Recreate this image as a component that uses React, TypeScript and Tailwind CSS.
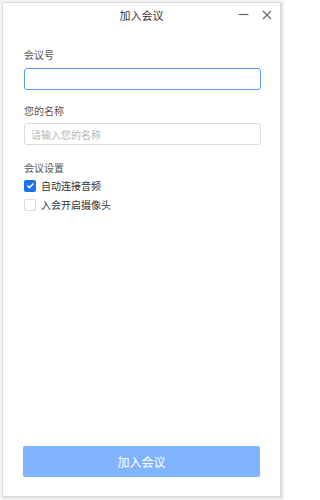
import { useState } from 'react';

const font = { fontFamily: '"Noto Sans CJK SC", "Noto Sans", sans-serif' };

export default function App() {
  const [audio, setAudio] = useState(true);
  const [camera, setCamera] = useState(false);

  return (
    <div className="w-[284px] h-[500px] bg-[#f4f4f4] pl-[2px] pt-[2px] pr-[3px] pb-[3px]" style={font}>
      <div className="h-full flex flex-col bg-white border border-[#dcdcdc] shadow-[1px_1px_2px_rgba(0,0,0,0.12)]">
        {/* title bar */}
        <div className="relative h-[24px] flex items-center justify-center">
          <span className="text-[11px] text-[#333]">加入会议</span>
          <div className="absolute right-[8px] top-[6px] flex items-center gap-[13px]">
            <svg width="11" height="11" viewBox="0 0 11 11">
              <path d="M0.5 5.5h10" stroke="#666" strokeWidth="1.2" />
            </svg>
            <svg width="10" height="10" viewBox="0 0 10 10">
              <path d="M1 1l8 8M9 1l-8 8" stroke="#666" strokeWidth="1.2" />
            </svg>
          </div>
        </div>

        <div className="flex-1 flex flex-col px-[21px]">
          <label className="mt-[21px] text-[10px] leading-[14px] text-[#555]">会议号</label>
          <input
            autoFocus
            className="mt-[6px] h-[22px] w-[237px] rounded-[3px] border border-[#5b9ef0] outline-none px-[6px] text-[10px]"
          />

          <label className="mt-[14px] text-[10px] leading-[14px] text-[#555]">您的名称</label>
          <input
            placeholder="请输入您的名称"
            className="mt-[5px] h-[22px] w-[237px] rounded-[3px] border border-[#dcdcdc] outline-none px-[6px] text-[10px] placeholder:text-[#b8b8b8]"
          />

          <div className="mt-[16px] text-[10px] leading-[14px] text-[#555]">会议设置</div>

          <button onClick={() => setAudio(!audio)} className="mt-[3px] h-[15px] flex items-center gap-[5px]">
            <span
              className={
                audio
                  ? 'w-[12px] h-[12px] rounded-[2px] bg-[#1a73e8] flex items-center justify-center'
                  : 'w-[12px] h-[12px] rounded-[2px] border border-[#dcdcdc] bg-white'
              }
            >
              {audio && (
                <svg width="9" height="9" viewBox="0 0 9 9">
                  <path d="M1.5 4.6l2 2 4-4.2" fill="none" stroke="#fff" strokeWidth="1.5" />
                </svg>
              )}
            </span>
            <span className="text-[10px] leading-[15px] text-[#333]">自动连接音频</span>
          </button>

          <button onClick={() => setCamera(!camera)} className="mt-[4px] h-[15px] flex items-center gap-[5px]">
            <span
              className={
                camera
                  ? 'w-[12px] h-[12px] rounded-[2px] bg-[#1a73e8] flex items-center justify-center'
                  : 'w-[12px] h-[12px] rounded-[2px] border border-[#dcdcdc] bg-white'
              }
            >
              {camera && (
                <svg width="9" height="9" viewBox="0 0 9 9">
                  <path d="M1.5 4.6l2 2 4-4.2" fill="none" stroke="#fff" strokeWidth="1.5" />
                </svg>
              )}
            </span>
            <span className="text-[10px] leading-[15px] text-[#333]">入会开启摄像头</span>
          </button>

          <div className="flex-1" />

          <button className="mb-[19px] ml-[-1px] h-[31px] w-[237px] rounded-[2px] bg-[#80b4ff] text-white text-[12px]">
            加入会议
          </button>
        </div>
      </div>
    </div>
  );
}
